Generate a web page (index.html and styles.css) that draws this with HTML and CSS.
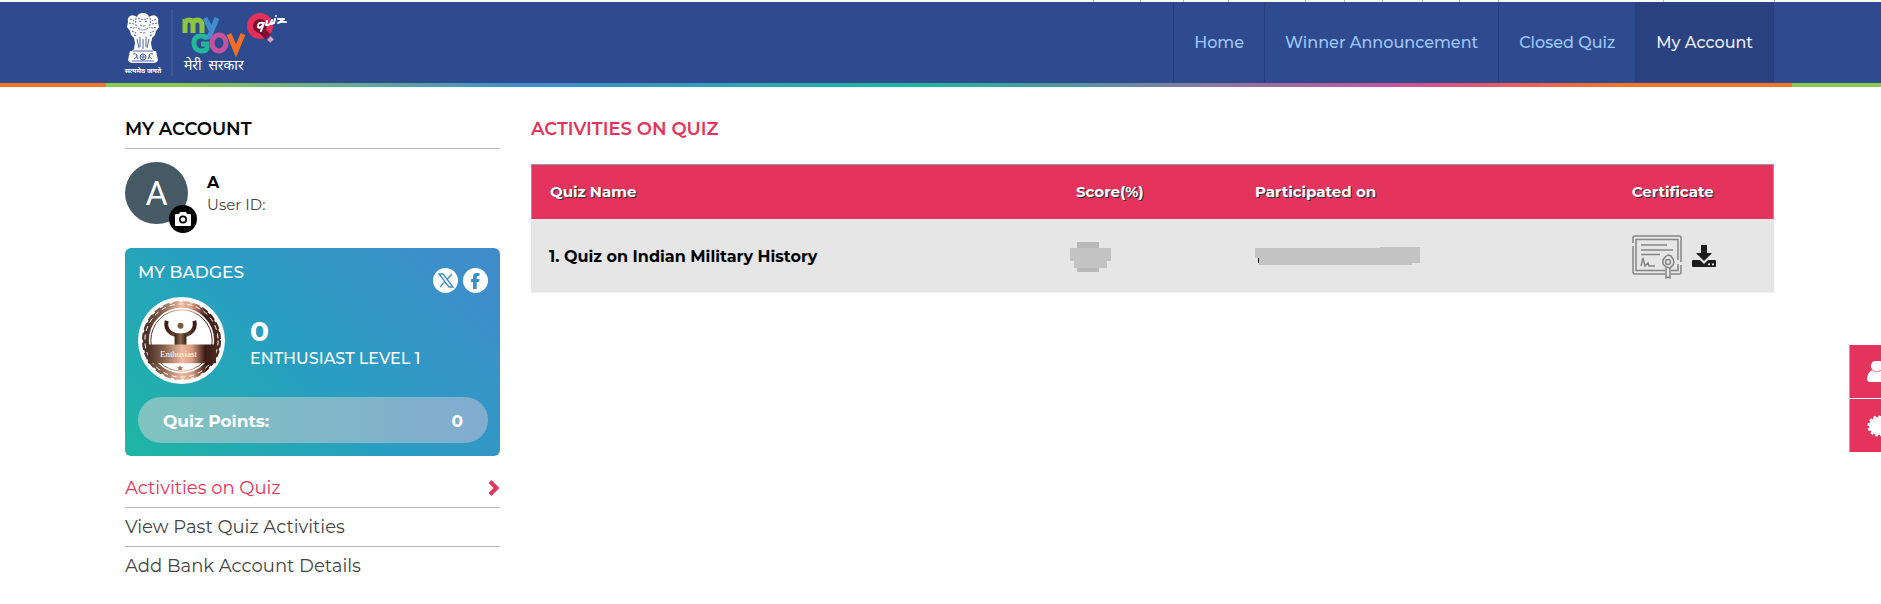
FILE: index.html
```html
<!DOCTYPE html>
<html lang="en">
<head>
<meta charset="utf-8">
<title>Activities on Quiz</title>
<link rel="stylesheet" href="styles.css">
</head>
<body>
<div class="topstrip" aria-hidden="true">
  <i class="w47"></i><i class="w43"></i><i class="w45"></i><i class="w77"></i><i class="w39"></i><i class="w38"></i><i class="w40"></i><i class="w37"></i><i class="w39"></i><i class="w165"></i><i class="w111 last"></i>
</div>
<header class="header">
  <a class="brand" href="#" aria-label="MyGov Quiz home">
    <svg class="emblem" viewBox="0 0 36 62" width="36" height="62" aria-hidden="true">
      <g fill="#fff">
        <path d="M12 4q1-4 6-4t6 4q4-3 7-1 3 2 2 6l1 5-3 4-1 4-3 3-1 4H10l-1-4-3-3-1-4-3-4 1-5q-1-4 2-6 3-2 7 1z"/>
        <path d="M9 24h18l-1 6 1 6 3 3v3H6v-3l3-3 1-6z"/>
        <path d="M5 38h26l2 9q-1 3-5 3H8q-4 0-5-3z"/>
      </g>
      <g fill="none" stroke="#2e4b8f" stroke-width="1" opacity=".85">
        <path stroke-dasharray="2 1" d="M13 5q5 3 10 0M14 8l3 1M22 8l-3 1M15 12q3 2 6 0M13 15q5 4 10 0M15 19q3 2 6 0M11 5q-1 6 1 10M25 5q1 6-1 10M5 6l4 2M31 6l-4 2M4 10l5 1M32 10l-5 1M5 14q3 2 6 0M31 14q-3 2-6 0M7 18l4 2M29 18l-4 2M9 22l3 1M27 22l-3 1"/>
        <path d="M12 26l2 9M15 24v10M18 26v10M21 24v10M24 26l-2 9M8 38h20"/>
        <circle cx="18" cy="44" r="3"/><path d="M18 41v6M15 44h6M8 41q3-1 4 1t-3 4M11 42l2 4M28 41q-3-1-4 1t3 4M25 42l-2 4M7 48h22"/>
      </g>
      <text class="motto" x="18" y="60" text-anchor="middle">सत्यमेव जयते</text>
    </svg>
    <span class="brand-line"></span>
    <svg class="mygov" viewBox="0 0 110 62" width="110" height="62" aria-hidden="true">
      <g fill="none" stroke-width="5">
        <path stroke="#8cc63f" d="M2 20V6m0 5q0-4 4-4t4 4v9m0-9q0-4 4-4t5 4v9"/>
        <path stroke="#428cce" d="M22 5l6 12M34 5l-7 17q-1 3-5 2"/>
        <path stroke="#22b69a" d="M24 25q-3-2-6-2-7 0-7 7t7 8q6 0 6-3v-4h-6"/>
        <ellipse stroke="#c3529f" cx="36" cy="30" rx="7" ry="8"/>
        <path stroke="#f36d25" d="M46 21l7 17 7-17"/>
        <circle stroke="#e4305a" stroke-width="6" fill="#7c0f2d" cx="77" cy="13" r="10"/>
        <path stroke="#7c0f2d" stroke-width="7" d="M77 16l8 8"/>
        <path stroke="#d9a5bd" stroke-width="5" d="M86 25l3 3"/>
      </g>
      <path fill="none" stroke="#fff" stroke-width="2" stroke-linecap="round" stroke-linejoin="round" d="M80 10q-5-1-5 3t5-1l1-2-3 8M84 8l-1 4q4 1 6-5l-1 4 3-1M92 6l-1 4M93 3v0M95 6h6l-6 4q3-2 8-1"/>
      <text class="hindi" x="1" y="57">मेरी <tspan dx="3">सरकार</tspan></text>
    </svg>
  </a>
  <nav class="nav">
    <a href="#">Home</a><a href="#">Winner Announcement</a><a href="#">Closed Quiz</a><a class="active" href="#">My Account</a>
  </nav>
</header>
<div class="rainbow"><span class="edge-left"></span><span class="band"></span><span class="edge-right"></span></div>

<div class="page">
  <aside class="sidebar">
    <h2 class="side-title">MY ACCOUNT</h2>
    <section class="profile">
      <div class="avatar">A
        <button class="camera" type="button" aria-label="Change photo">
          <svg viewBox="0 0 16 14" width="16" height="14"><path fill="#fff" fill-rule="evenodd" d="M1 2h3l1-2h6l1 2h3q1 0 1 1v10q0 1-1 1H1q-1 0-1-1V3q0-1 1-1zM8 3.500a4 4 0 1 0 0 8a4 4 0 0 0 0-8z"/><circle cx="8" cy="7.500" r="2.300" fill="#fff"/></svg>
        </button>
      </div>
      <div class="who"><strong>A</strong><span>User ID:</span></div>
    </section>
    <section class="card">
      <div class="card-head">
        <h3>MY BADGES</h3>
        <div class="share">
          <a href="#" aria-label="Share on X"><svg viewBox="0 0 16 15" width="16" height="15"><path fill="none" stroke="#3b8fca" stroke-width="1.300" d="M1 1h4l10 13h-4zM14 1L9 6.500M2 14l5-5.500"/></svg></a>
          <a href="#" aria-label="Share on Facebook"><svg viewBox="0 0 9 16" width="9" height="16"><path fill="#3b8fca" d="M2 16V9H0V6h2V4q0-4 4-4H8.500v3H7Q5.700 3 5.700 4.300V6h2.800L8 9H5.700v7z"/></svg></a>
        </div>
      </div>
      <div class="badge-row">
        <svg class="medal" viewBox="0 0 88 88" width="87" height="87" role="img" aria-label="Enthusiast badge">
          <defs><linearGradient id="bronze"><stop offset="0" stop-color="#4a3028"/><stop offset=".22" stop-color="#80604a"/><stop offset=".5" stop-color="#f0b8a0"/><stop offset=".65" stop-color="#d89a80"/><stop offset=".84" stop-color="#3a1a14"/><stop offset="1" stop-color="#4a2a20"/></linearGradient>
          <linearGradient id="man"><stop offset="0" stop-color="#3a1c14"/><stop offset=".5" stop-color="#8a6a4a"/><stop offset="1" stop-color="#3a1c14"/></linearGradient></defs>
          <circle cx="44" cy="44" r="44" fill="#fff"/>
          <circle cx="44" cy="44" r="36" fill="none" stroke="url(#bronze)" stroke-width="6"/>
          <circle cx="44" cy="44" r="38" fill="none" stroke="url(#bronze)" stroke-width="4" stroke-dasharray="7 3"/>
          <circle cx="44" cy="44" r="37" fill="none" stroke="#fff" stroke-width="1" stroke-dasharray="5 4"/>
          <circle cx="44" cy="44" r="31" fill="none" stroke="url(#bronze)" stroke-width="1"/>
          <path d="M29 24c-2 9 4 15 14 15s16-6 14-15" fill="none" stroke="url(#man)" stroke-width="4"/>
          <path fill="url(#man)" d="M37 37h12v12H37z"/><circle cx="43" cy="29" r="3" fill="#7c5a40"/>
          <path fill="url(#bronze)" d="M10 48h69v19H10z"/>
          <text class="medal-text" x="41" y="61" text-anchor="middle">Enthusiast</text>
          <path fill="#b0664a" d="M42.500 69l1 2 2 0-1.500 1.500.5 2-2-1-2 1 .5-2-1.500-1.500 2 0z"/>
        </svg>
        <div class="level"><strong>0</strong><span>ENTHUSIAST LEVEL 1</span></div>
      </div>
      <div class="points"><span>Quiz Points:</span><span>0</span></div>
    </section>
    <ul class="menu">
      <li><a class="current" href="#">Activities on Quiz<svg viewBox="0 0 12 16" width="12" height="16" aria-hidden="true"><path fill="none" stroke="#e4335c" stroke-width="4" d="M2 1.500L8.500 8 2 14.500"/></svg></a></li>
      <li><a href="#">View Past Quiz Activities</a></li>
      <li><a href="#">Add Bank Account Details</a></li>
    </ul>
  </aside>

  <main class="main">
    <h1>ACTIVITIES ON QUIZ</h1>
    <table class="quizzes">
      <colgroup><col class="c-name"><col class="c-score"><col class="c-date"><col class="c-cert"></colgroup>
      <thead><tr><th>Quiz Name</th><th>Score(%)</th><th>Participated on</th><th>Certificate</th></tr></thead>
      <tbody><tr>
        <td>1. Quiz on Indian Military History</td>
        <td class="score"><svg viewBox="0 0 41 30" width="41" height="30" aria-hidden="true"><path fill="#b9b9b9" d="M7 0h22v30H7z"/><path fill="#c3c3c3" d="M0 6h41v13h-4v7H4v-7H0z"/></svg></td>
        <td><svg viewBox="0 0 165 19" width="165" height="19" aria-hidden="true"><path fill="#c3c3c3" d="M0 1h125V0h40v16h-8v2H4v-7H0z"/><path fill="#000" d="M3 11h1v5H3z"/></svg></td>
        <td><div class="cert">
          <a href="#" aria-label="View certificate"><svg viewBox="0 0 50 44" width="50" height="44"><g fill="none" stroke="#858585" stroke-width="1.500"><path d="M1 8V3q0-2 2-2h44q2 0 2 2v24M1 11v26q0 2 2 2h30M39 39h8q2 0 2-2v-7"/><path d="M33 35.500H4V4.500h42V25M46 29v6.500h-7M9 10h26M9 15h32M9 19.500h19M9 31l2-8 2 8 3-3 1 3h6"/><path d="M36 20l3 1 2 3 1 3-1 3-3 3-4-1-3-3v-4l2-3z"/><circle cx="36" cy="27" r="2.500"/><path d="M34 33v10l2-1 2 1V33"/></g></svg></a>
          <a href="#" aria-label="Download certificate"><svg viewBox="0 0 24 23" width="24" height="23"><path fill="#1d1d1d" d="M9 0h6v8h5l-8 8-8-8h5z"/><path fill="#1d1d1d" fill-rule="evenodd" d="M1 15h7l4 4 4-4h7q1 0 1 1v5q0 1-1 1H1q-1 0-1-1v-5q0-1 1-1zm15 3.500v1.800h2v-1.800zm4 0v1.800h2v-1.800z"/></svg></a>
        </div></td>
      </tr></tbody>
    </table>
  </main>
</div>

<div class="floaters">
  <button type="button" aria-label="Profile"><svg viewBox="0 0 20 21" width="20" height="21"><path fill="#fff" d="M10 0a5 5 0 0 1 3 9.500q-3 2-6 0A5 5 0 0 1 10 0zM5 9q5 4 10 0 4 2 5 8 0 4-3 4H3q-3 0-3-4 1-6 5-8z"/></svg></button>
  <button type="button" aria-label="Badges"><svg viewBox="0 0 22 22" width="22" height="22"><circle cx="11" cy="11" r="9" fill="#fff"/><circle cx="11" cy="11" r="9" fill="none" stroke="#fff" stroke-width="3" stroke-dasharray="2.700 2"/></svg></button>
</div>
</body>
</html>
```
FILE: styles.css
```css
* { box-sizing: border-box; }
body { margin: 0; background: #fff; color: #000; font-family: Montserrat, Inter, "Liberation Sans", "Noto Sans", sans-serif; font-size: 18px; overflow-x: hidden; }
a { text-decoration: none; }
h1, h2, h3, ul { margin: 0; padding: 0; }
svg { display: block; }

.topstrip { display: flex; justify-content: flex-end; height: 2px; padding-right: 106px; }
.topstrip i { border-left: 1px solid #bbb; }
.topstrip .last { border-right: 1px solid #bbb; }
.w37 { width: 37px; } .w38 { width: 38px; } .w39 { width: 39px; } .w40 { width: 40px; }
.w43 { width: 43px; } .w45 { width: 45px; } .w47 { width: 47px; } .w77 { width: 77px; }
.w111 { width: 112px; } .w165 { width: 165px; }

.header { display: flex; justify-content: space-between; height: 81px; padding: 0 107px 0 125px; background: #2e4b8f; }
.brand { display: flex; align-items: flex-start; padding-top: 7px; }
.emblem, .mygov { margin-top: 4px; overflow: visible; }
.brand-line { width: 2px; height: 67px; margin: 0 10px; background: #3a5698; }
.motto { font: bold 7px "Noto Sans Devanagari", "Noto Sans", sans-serif; fill: #fff; }
.hindi { font: 14px "Noto Sans Devanagari", "Noto Sans", sans-serif; fill: #fff; }
.nav { display: flex; height: 80px; border-right: 1px solid #273f7b; }
.nav a { display: flex; align-items: center; padding: 0 20px; border-left: 1px solid #273f7b; color: #9fc6fb; font-size: 16px; font-weight: 500; }
.nav .active { background: #2a427f; color: #e8ebf3; }

.rainbow { display: flex; height: 4px; }
.edge-left { width: 106px; background: #f77427; }
.edge-right { width: 89px; background: #8fc84c; }
.band { flex: 1; background: linear-gradient(90deg, #8fc84c 4%, #428ccf 25%, #20b69d 48%, #c9559f 76%, #e6556c 81%, #f77427 90%); }

.page { display: flex; gap: 31px; padding: 27px 107px 0 125px; }
.sidebar { flex: 0 0 375px; }
.side-title { height: 35px; border-bottom: 1px solid #b9b9b9; font-size: 18px; line-height: 30px; font-weight: 600; }
.profile { display: flex; gap: 19px; padding: 13px 0 24px; }
.avatar { position: relative; width: 63px; height: 62px; border-radius: 50%; background: #455a64; color: #fff; font: 34px/62px Roboto, sans-serif; text-align: center; }
.camera { position: absolute; right: -9px; bottom: -9px; display: flex; align-items: center; justify-content: center; width: 28px; height: 28px; padding: 0; border: 0; border-radius: 50%; background: #000; }
.who { display: flex; flex-direction: column; padding-top: 10px; font-size: 15px; line-height: 22px; color: #444; }
.who strong { color: #000; font-size: 16px; font-weight: 700; }

.card { height: 208px; padding: 13px 12px 13px 13px; border-radius: 6px; color: #fff; background: linear-gradient(45deg, #1eb6a3, #289fc1 45%, #428bcc); }
.card-head { display: flex; justify-content: space-between; height: 36px; }
.card-head h3 { font-size: 17px; line-height: 22px; font-weight: 500; }
.share { display: flex; gap: 5px; padding-top: 7px; }
.share a { display: flex; align-items: center; justify-content: center; width: 25px; height: 25px; border-radius: 50%; background: #fff; }
.badge-row { display: flex; gap: 25px; height: 100px; }
.medal-text { font: 9px "Liberation Serif", serif; fill: #fff; }
.level { display: flex; flex-direction: column; padding-top: 18px; }
.level strong { font-size: 28px; line-height: 32px; }
.level span { font-size: 16px; line-height: 24px; font-weight: 500; }
.points { display: flex; align-items: center; justify-content: space-between; height: 46px; padding: 2px 25px 0; border-radius: 23px; background: linear-gradient(90deg, #7fc3bf, #82acd0); font-size: 17px; font-weight: 700; }

.menu { padding-top: 13px; list-style: none; }
.menu li { border-bottom: 1px solid #b9b9b9; }
.menu li:last-child { border: 0; }
.menu a { display: flex; align-items: center; justify-content: space-between; height: 38px; color: #444; font-size: 18px; font-weight: 400; }
.menu .current { color: #e4335c; }

.main { flex: 1; min-width: 0; }
.main h1 { padding-bottom: 20px; color: #e4335c; font-size: 18px; line-height: 30px; font-weight: 600; }
.quizzes { width: 100%; table-layout: fixed; border-collapse: separate; border-spacing: 0; }
.c-name { width: 42.4%; } .c-score { width: 14.4%; } .c-date { width: 30.3%; } .c-cert { width: 12.9%; }
.quizzes th { height: 55px; padding: 0 18px 2px; border-top: 1px solid #999; background: #e4335c; color: #fff; font-size: 15px; font-weight: 700; text-align: left; text-shadow: 1px 1px 0 #333; }
.quizzes th:first-child { border-left: 1px solid #999; }
.quizzes th:last-child { border-right: 1px solid #999; }
.quizzes td { height: 74px; padding: 2px 18px 0; border-bottom: 1px solid #f1f1f1; background: #e6e6e6; font-size: 16px; font-weight: 700; }
.quizzes .score { padding-left: 12px; }
.cert { display: flex; align-items: center; gap: 10px; }

.floaters { position: fixed; right: 0; top: 345px; width: 32px; overflow: hidden; }
.floaters button { display: flex; align-items: center; width: 53px; height: 53px; margin-bottom: 1px; padding: 0 0 0 17px; border: 0; border-left: 1px solid #f0859d; background: #e4335c; }
```
